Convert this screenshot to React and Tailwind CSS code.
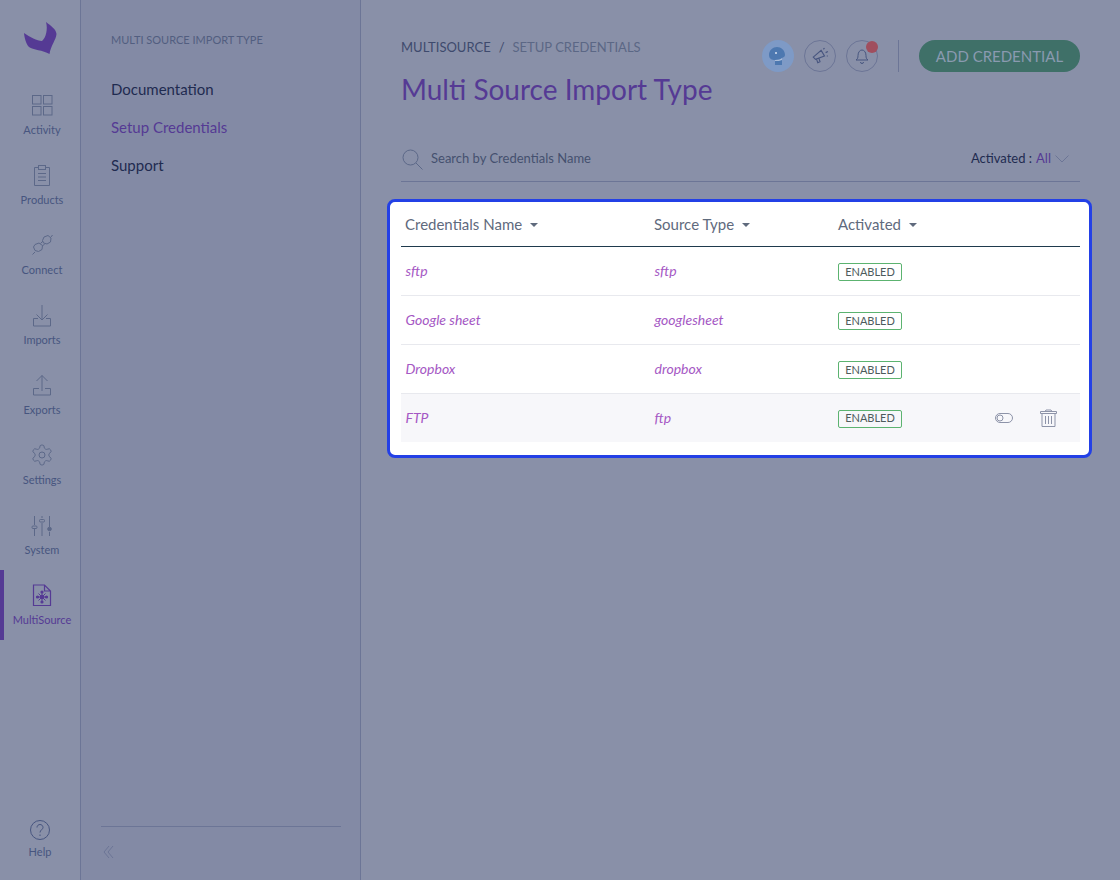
import React from 'react';

const Ic = ({ children, w = 24, h = 24, vb = '0 0 24 24', className = 'text-[#5c6888]' }) => (
    <svg width={w} height={h} viewBox={vb} fill="none" stroke="currentColor" strokeWidth="1" className={className}>
        {children}
    </svg>
);

const navItems = [
    {
        label: 'Activity',
        icon: (
            <Ic>
                <rect x="2.500" y="2.500" width="8.500" height="8.500" />
                <rect x="13.500" y="2.500" width="8.500" height="8.500" />
                <rect x="2.500" y="13.500" width="8.500" height="8.500" />
                <rect x="13.500" y="13.500" width="8.500" height="8.500" />
            </Ic>
        ),
    },
    {
        label: 'Products',
        icon: (
            <Ic>
                <path d="M8.500 4.500H4.500v18h15v-18h-4" />
                <rect x="8.500" y="2.500" width="7" height="4" />
                <path d="M8 10.500h8M8 14h8M8 17.500h8" />
            </Ic>
        ),
    },
    {
        label: 'Connect',
        icon: (
            <Ic>
                <path d="M5 11.500l4-1.500 3.500 2.500-.5 4-3.500 2-3.500-1-1.500-3.500z" />
                <path d="M14 4l4-1.500 3 2.500-.5 4-3.500 2-3.500-1L12.500 7.500z" />
                <path d="M2.500 21.500l2.500-2.500M21 4l1.500-2M10.500 10.500l2.500-2.500M12.500 13l2-2" />
            </Ic>
        ),
    },
    {
        label: 'Imports',
        icon: (
            <Ic>
                <path d="M12 2v15M6.500 11.500l5.500 5.500 5.500-5.500" />
                <path d="M8 15.500H3.500v7.500h17v-7.500H16" />
            </Ic>
        ),
    },
    {
        label: 'Exports',
        icon: (
            <Ic>
                <path d="M12 18V2.500M6.500 8L12 2.500 17.500 8" />
                <path d="M9 15.500H3.500v6.500h17v-6.500H15" />
            </Ic>
        ),
    },
    {
        label: 'Settings',
        icon: (
            <Ic>
                <circle cx="12" cy="12" r="3" />
                <path d="M12.220 2h-.44a2 2 0 0 0-2 2v.18a2 2 0 0 1-1 1.730l-.43.25a2 2 0 0 1-2 0l-.15-.08a2 2 0 0 0-2.730.73l-.22.38a2 2 0 0 0 .73 2.730l.15.1a2 2 0 0 1 1 1.720v.51a2 2 0 0 1-1 1.740l-.15.09a2 2 0 0 0-.73 2.730l.22.38a2 2 0 0 0 2.730.73l.15-.08a2 2 0 0 1 2 0l.43.25a2 2 0 0 1 1 1.730V20a2 2 0 0 0 2 2h.44a2 2 0 0 0 2-2v-.18a2 2 0 0 1 1-1.730l.43-.25a2 2 0 0 1 2 0l.15.08a2 2 0 0 0 2.730-.73l.22-.39a2 2 0 0 0-.73-2.730l-.15-.08a2 2 0 0 1-1-1.740v-.5a2 2 0 0 1 1-1.740l.15-.09a2 2 0 0 0 .73-2.730l-.22-.38a2 2 0 0 0-2.730-.73l-.15.08a2 2 0 0 1-2 0l-.43-.25a2 2 0 0 1-1-1.730V4a2 2 0 0 0-2-2z" />
            </Ic>
        ),
    },
    {
        label: 'System',
        icon: (
            <Ic>
                <path d="M4.500 3v9M4.500 16v7M12 3v2M12 10v13M19.500 3v11M19.500 19v4" />
                <rect x="2" y="13" width="5" height="2.500" rx="1" />
                <rect x="9.500" y="6.500" width="5" height="2.500" rx="1" />
                <circle cx="19.500" cy="16" r="1.800" fill="currentColor" />
            </Ic>
        ),
    },
];

const Row = ({ name, type, hover }) => (
    <div className={`grid grid-cols-[249px_184px_1fr] items-center px-[5px] ${hover ? 'h-[48px] bg-[#f7f7fa]' : 'h-[49px] border-b border-[#e8e9ee]'}`}>
        <span className="italic text-[14px] -mt-[1px] -ml-[0.5px] text-[#a558c4]">{name}</span>
        <span className="italic text-[14px] -mt-[1px] -ml-[0.5px] text-[#a558c4]">{type}</span>
        <div className="flex items-center justify-between pr-[18px] -ml-[1px]">
            <span className={`h-[18px] w-[64px] flex items-center justify-center border border-[#5cb370] rounded-[2px] text-[11px] text-[#4d5b5c] ${hover ? 'mt-[1px]' : 'mt-[2px]'}`}>ENABLED</span>
            {hover && (
                <div className="flex items-center gap-[27px]">
                    <svg width="18" height="10" viewBox="0 0 18 10" fill="none" stroke="#8d93a8" strokeWidth="1">
                        <rect x="0.500" y="0.500" width="17" height="9" rx="4.500" />
                        <circle cx="5" cy="5" r="3" />
                    </svg>
                    <svg width="17" height="18" viewBox="0 0 17 18" fill="none" stroke="#8d93a8" strokeWidth="1">
                        <path d="M0.500 2.500h16v2H.5zM2 4.500v13h13v-13M5 2.500l1-1.500h5l1 1.500" />
                        <path d="M5.500 7v8M8.500 7v8M11.500 7v8" />
                    </svg>
                </div>
            )}
        </div>
    </div>
);

const HeadCell = ({ children }) => (
    <div className="flex items-center gap-[8px] text-[15px] text-[#5f6a7d]">
        {children}
        <span className="mt-[2px] w-0 h-0 border-x-[4.500px] border-x-transparent border-t-[4px] border-t-[#5f6a7d]"></span>
    </div>
);

export default function App() {
    return (
        <div className="flex h-[880px] w-[1120px] overflow-hidden bg-[#8990a8] font-['Lato',sans-serif]">
            {/* icon rail */}
            <div className="w-[81px] shrink-0 flex flex-col border-r border-[#6c7596]">
                <div className="h-[80px] pt-[21px] pl-[24px]">
                    <svg width="33" height="34" viewBox="0 0 33 34">
                        <path d="M22 1C27 5 32 8 32.500 13 32 19 27 24 25.500 33 19 29 9 29 5 26 2 23 .5 17 0 12 6 16 13 20 18 20 22 17 24 8 22 1z" fill="#553a94" />
                    </svg>
                </div>
                {navItems.map(item => (
                    <div key={item.label} className="h-[70px] flex flex-col items-center pt-[13px] pl-[4px] gap-[5px]">
                        {item.icon}
                        <span className="text-[11px] leading-[16px] text-[#47557f]">{item.label}</span>
                    </div>
                ))}
                <div className="h-[70px] flex flex-col items-center pt-[13px] gap-[5px] border-l-[4px] border-[#553a94]">
                    <svg width="24" height="24" viewBox="0 0 24 24" fill="none" stroke="#553a94" strokeWidth="1.200">
                        <path d="M3.500 2h11l6 6v14.500h-17zM14.500 2v6h6" />
                        <path d="M12 9v10M7.500 14h9M8.500 10.500l7 7M15.500 10.500l-7 7" strokeWidth="1" />
                        <circle cx="12" cy="14" r="1.600" fill="#553a94" />
                        <circle cx="12" cy="9" r="1" fill="#553a94" />
                        <circle cx="12" cy="19" r="1" fill="#553a94" />
                        <circle cx="7.500" cy="14" r="1" fill="#553a94" />
                        <circle cx="16.500" cy="14" r="1" fill="#553a94" />
                    </svg>
                    <span className="text-[11px] leading-[16px] text-[#553a94]">MultiSource</span>
                </div>
                <div className="mt-auto flex flex-col items-center pb-[20px]">
                    <svg width="20" height="20" viewBox="0 0 20 20" fill="none" stroke="#47557f" strokeWidth="1">
                        <circle cx="10" cy="10" r="9.500" />
                        <path d="M7 7.500C7 5.500 8.500 4.500 10 4.500s3 1 3 3c0 2-3 2.500-3 5M10 14.500v1.500" />
                    </svg>
                    <span className="mt-[4px] text-[11px] leading-[16px] text-[#47557f]">Help</span>
                </div>
            </div>

            {/* secondary column */}
            <div className="w-[280px] shrink-0 flex flex-col border-r border-[#6c7596] bg-[#838aa5] pt-[33px] pl-[20px] pr-[19px]">
                <div className="pl-[10px] text-[11px] leading-[14px] text-[#525e80]">MULTI SOURCE IMPORT TYPE</div>
                <div className="pl-[10px] mt-[31px] flex flex-col gap-[16px] text-[15px] leading-[22px]">
                    <span className="text-[#1f2b50]">Documentation</span>
                    <span className="text-[#553a94]">Setup Credentials</span>
                    <span className="text-[#1f2b50]">Support</span>
                </div>
                <div className="mt-auto border-t border-[#6c7596] h-[54px] pb-[3px] flex items-center pl-[2px]">
                    <svg width="11" height="14" viewBox="0 0 11 14" fill="none" stroke="#6c7596" strokeWidth="1">
                        <path d="M6 1L1 7l5 6M10 1L5 7l5 6" />
                    </svg>
                </div>
            </div>

            {/* main */}
            <div className="flex-1 px-[40px] pt-[40px]">
                <div className="flex justify-between h-[72px]">
                    <div>
                        <div className="h-[16px] flex items-center text-[13px] text-[#3e4a6d] whitespace-nowrap">
                            <span>MULTISOURCE</span>
                            <span className="mx-[8px]">/</span>
                            <span className="text-[#5b6785]">SETUP CREDENTIALS</span>
                        </div>
                        <h1 className="mt-[13px] text-[28px] leading-[40px] text-[#553a94]">Multi Source Import Type</h1>
                    </div>
                    <div className="flex items-start">
                        <div className="w-[32px] h-[32px] rounded-full bg-[#7e9ac6] flex items-center justify-center">
                            <svg width="20" height="22" viewBox="0 0 20 22">
                                <path d="M1 10C1 5 5 2 9 2s8 3 8 8c0 2-2 2-3 3v7H7v-5c-3 0-6-1-6-5z" fill="#4d78b0" />
                                <path d="M7 15c3 0 6-1 7-2v2c-2 1-4 1-7 1z" fill="#a9bcd8" />
                                <circle cx="8" cy="8" r="1" fill="#d8e2f0" />
                            </svg>
                        </div>
                        <div className="ml-[10px] w-[32px] h-[32px] rounded-full border border-[#6c7596] flex items-center justify-center">
                            <svg width="18" height="18" viewBox="0 0 16 16" fill="none" stroke="#47557f" strokeWidth="1">
                                <path d="M2 9l7-6 3 5-8 3zM5 11l1 3 2-1-1-3M11 2l1-1M13 5l2-1M14 8h1" />
                            </svg>
                        </div>
                        <div className="relative ml-[10px] w-[32px] h-[32px] rounded-full border border-[#6c7596] flex items-center justify-center">
                            <svg width="16" height="16" viewBox="0 0 16 16" fill="none" stroke="#47557f" strokeWidth="1">
                                <path d="M2 12c1.500-1 2-2 2-4.500C4 4 6 2 8 2s4 2 4 5.500c0 2.500.5 3.500 2 4.500zM6.500 14a1.500 1.500 0 003 0" />
                            </svg>
                            <span className="absolute top-0 -right-[1px] w-[12px] h-[12px] rounded-full bg-[#a04e5e]"></span>
                        </div>
                        <div className="ml-[20px] w-px h-[32px] bg-[#6c7596]"></div>
                        <button className="ml-[20px] w-[161px] h-[32px] rounded-full bg-[#3f7068] text-[15px] text-[#8a9ab0]">ADD CREDENTIAL</button>
                    </div>
                </div>

                <div className="mt-[16px] h-[54px] flex items-center justify-between border-b border-[#6c7596] pt-[9px]">
                    <div className="flex items-center gap-[8px] pl-[1px]">
                        <svg width="21" height="21" viewBox="0 0 21 21" fill="none" stroke="#5c6888" strokeWidth="1">
                            <circle cx="8.500" cy="8.500" r="7.500" />
                            <path d="M14 14l6.500 6.500" />
                        </svg>
                        <span className="text-[13px] text-[#45506f]">Search by Credentials Name</span>
                    </div>
                    <div className="flex items-center text-[13px] pr-[11px]">
                        <span className="text-[#1f2b50]">Activated :</span>
                        <span className="ml-[4px] text-[#553a94]">All</span>
                        <svg className="ml-[4px]" width="14" height="8" viewBox="0 0 14 8" fill="none" stroke="#6c7596" strokeWidth="1">
                            <path d="M0.500 0.500L7 7l6.500-6.500" />
                        </svg>
                    </div>
                </div>

                <div className="mt-[17px] -ml-[14px] -mr-[12px] h-[259px] rounded-[8px] border-[3px] border-[#2340e6] bg-white pl-[11px] pr-[9px]">
                    <div className="grid grid-cols-[249px_184px_1fr] items-center h-[45px] px-[4px] border-b border-[#1f3a4d]">
                        <HeadCell>Credentials Name</HeadCell>
                        <HeadCell>Source Type</HeadCell>
                        <HeadCell>Activated</HeadCell>
                    </div>
                    <Row name="sftp" type="sftp" />
                    <Row name="Google sheet" type="googlesheet" />
                    <Row name="Dropbox" type="dropbox" />
                    <Row name="FTP" type="ftp" hover />
                </div>
            </div>
        </div>
    );
}
